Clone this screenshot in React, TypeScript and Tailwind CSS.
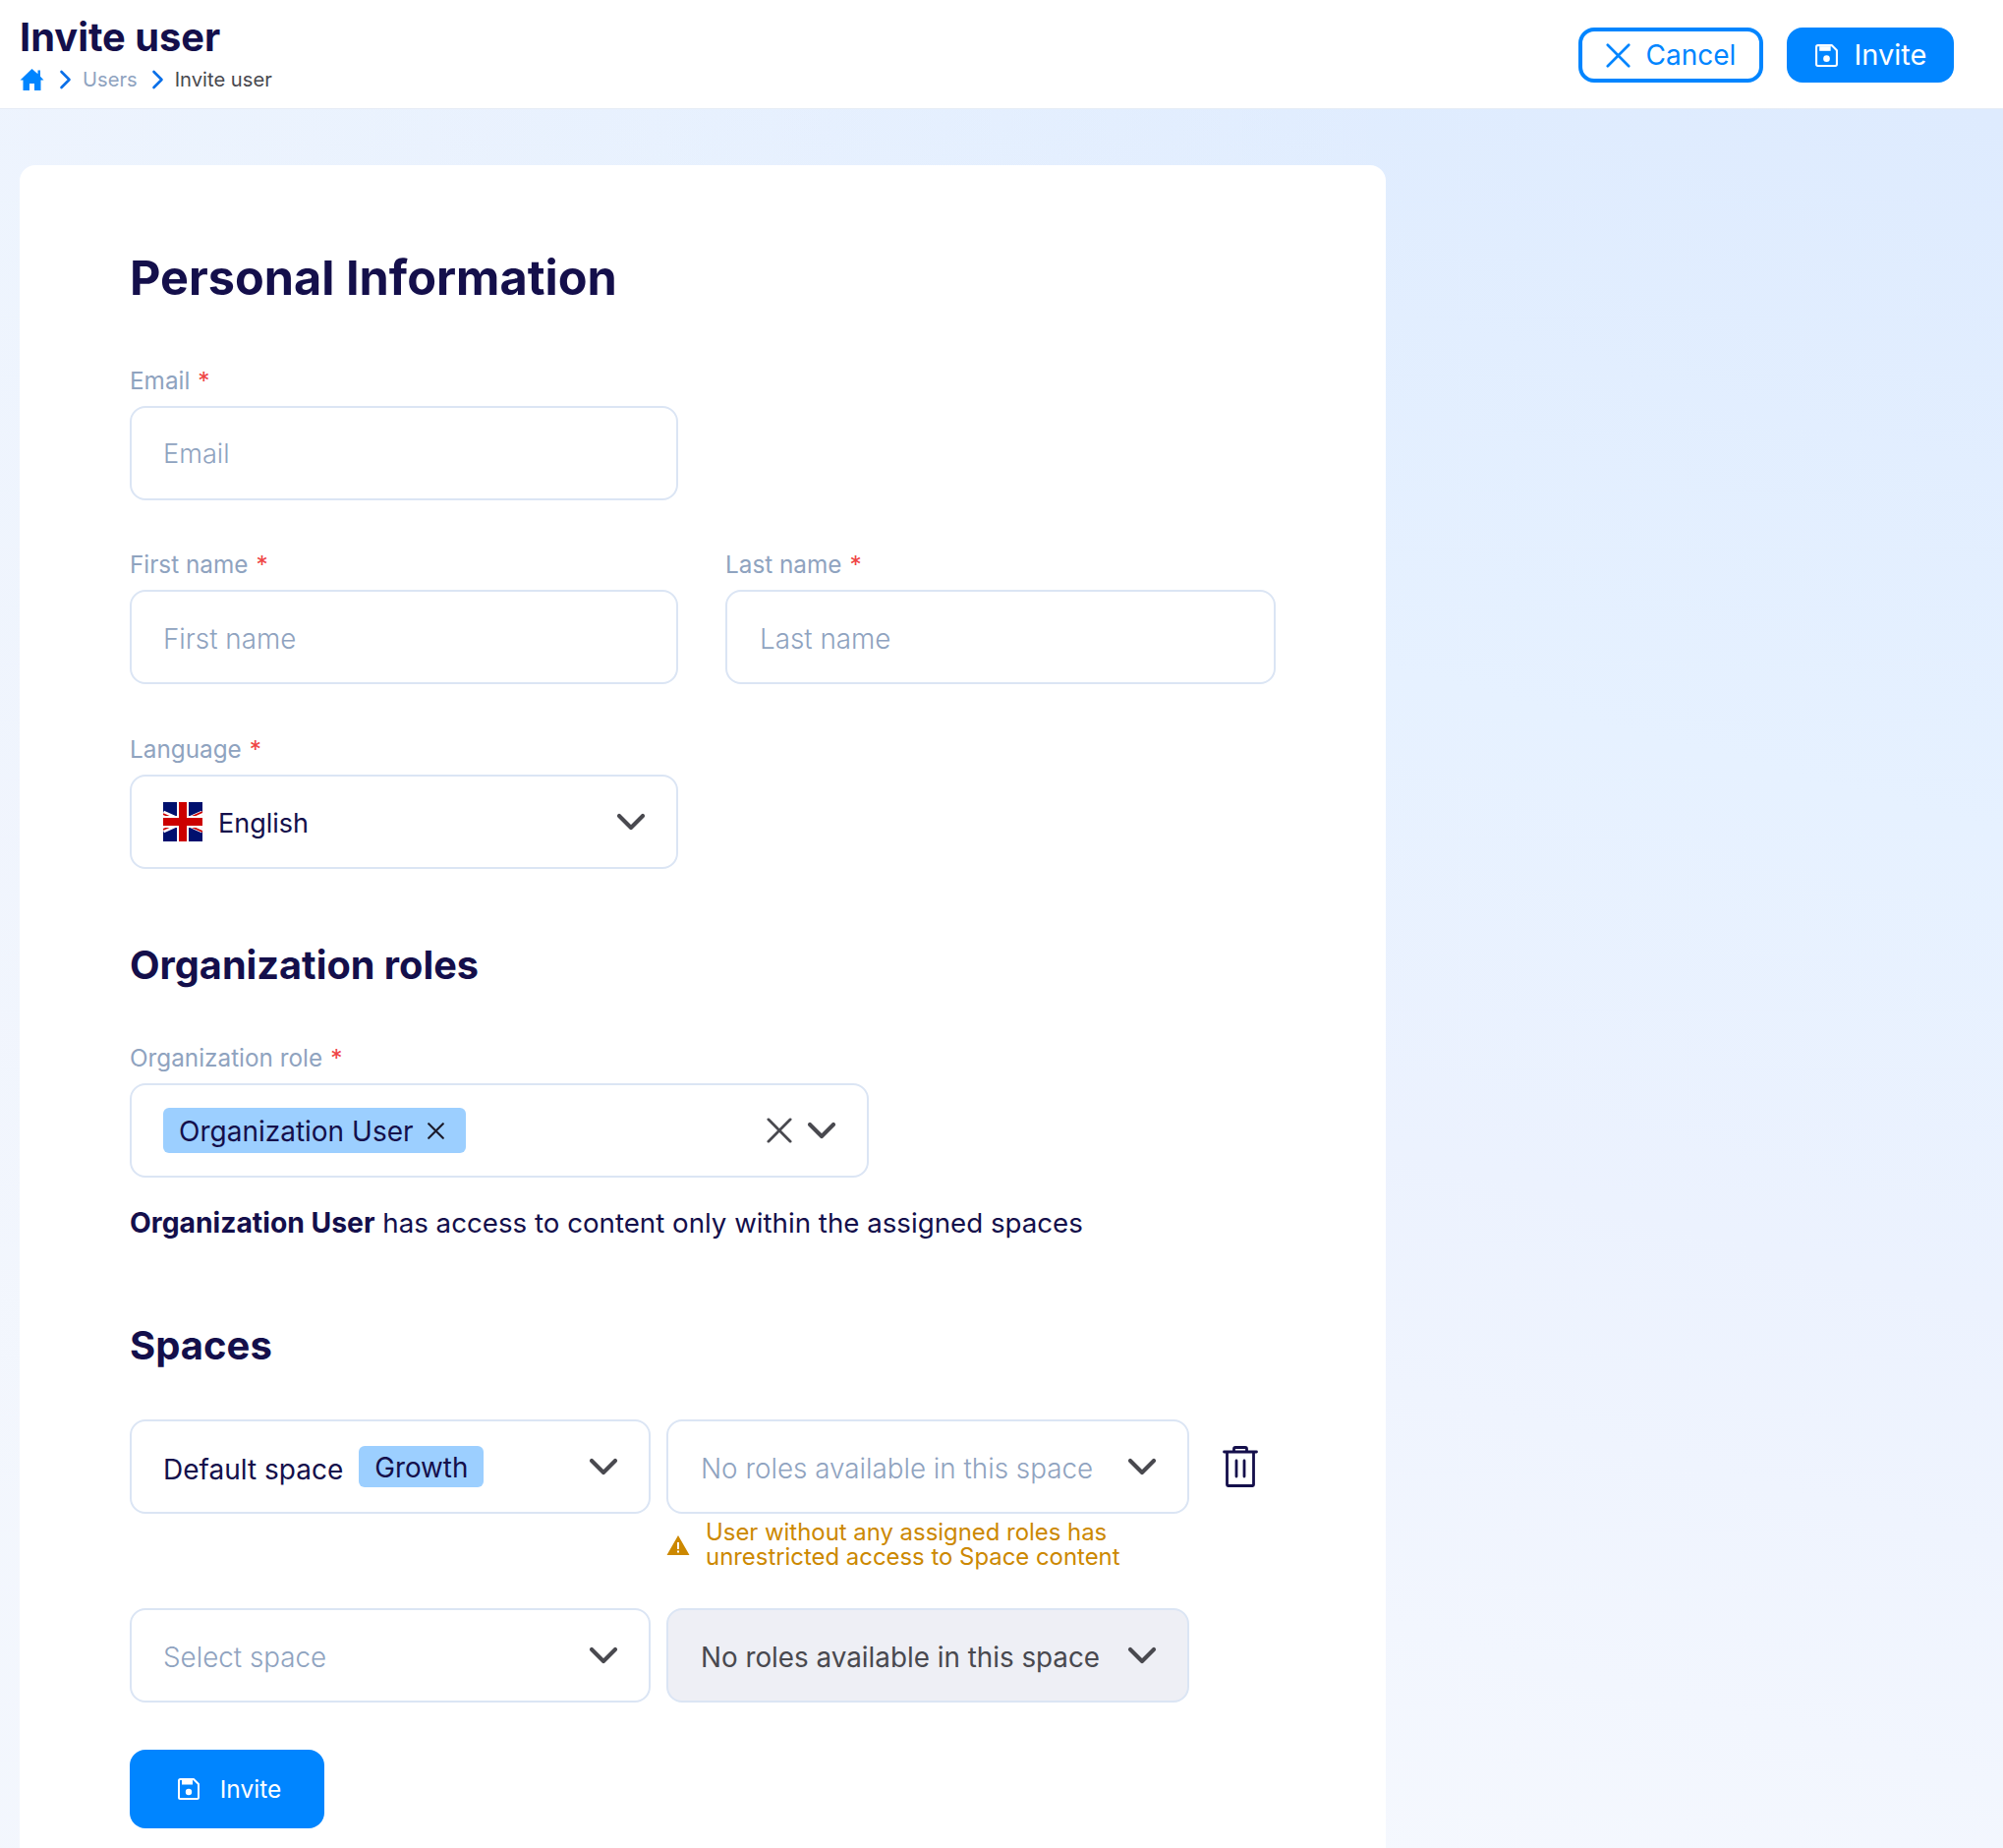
import React from 'react';

const Chevron = ({ className }: { className?: string }) => (
  <svg viewBox="0 0 30 20" fill="none" stroke="currentColor" strokeWidth="4.2" strokeLinecap="round" strokeLinejoin="round" className={className}>
    <path d="M3 4l12 12L27 4" />
  </svg>
);

const Cross = ({ className, width = 3 }: { className?: string; width?: number }) => (
  <svg viewBox="0 0 28 28" fill="none" stroke="currentColor" strokeWidth={width} strokeLinecap="round" className={className}>
    <path d="M2 2l24 24M26 2L2 26" />
  </svg>
);

const Crumb = () => (
  <svg viewBox="0 0 12 20" fill="none" stroke="#0a6fe8" strokeWidth="2.6" strokeLinecap="round" strokeLinejoin="round" className="w-[13px] h-[20px]">
    <path d="M2 2l8 8-8 8" />
  </svg>
);

const Save = ({ className }: { className?: string }) => (
  <svg viewBox="0 0 24 24" fill="none" stroke="currentColor" strokeWidth="2" strokeLinejoin="round" className={className}>
    <path d="M2 3.500A1.500 1.500 0 0 1 3.500 2H17l5 5v13.500a1.500 1.500 0 0 1-1.500 1.500h-17A1.500 1.500 0 0 1 2 20.500z" />
    <path d="M5 3h11v4.500H5z" fill="currentColor" stroke="none" />
    <circle cx="12" cy="15" r="3.200" fill="currentColor" stroke="none" />
  </svg>
);

const Field = ({ label, children }: { label: string; children: React.ReactNode }) => (
  <div className="flex flex-col">
    <div className="h-[28px] mb-[12px] flex items-center gap-[8px] text-[24.300px] text-[#8fa3bf]">
      <span>{label}</span>
      <span className="text-[#ef4444]">*</span>
    </div>
    {children}
  </div>
);

const Box = ({ children, className = '' }: { children?: React.ReactNode; className?: string }) => (
  <div className={`h-[96px] border-2 border-[#dbe5f4] rounded-[16px] flex items-center text-[27.800px] ${className}`}>
    {children}
  </div>
);

const Flag = () => (
  <svg viewBox="0 0 40 40" className="w-[40px] h-[40px] shrink-0">
    <rect width="40" height="40" fill="#00106e" />
    <path d="M0 11L40 29M40 11L0 29" stroke="#fff" strokeWidth="5" />
    <path d="M0 12L40 30M40 10L0 28" stroke="#cc0000" strokeWidth="1.800" />
    <path d="M20 0v40M0 20h40" stroke="#fff" strokeWidth="12" />
    <path d="M20 0v40M0 20h40" stroke="#cc0000" strokeWidth="8" />
  </svg>
);

export default function App() {
  return (
    <div
      className="h-[1880px] overflow-hidden flex flex-col bg-[linear-gradient(90deg,#f2f6fdaa,transparent_70%),linear-gradient(195deg,#deebfe_5%,#e6f1ff_35%,#ecf2fe_55%,#f5f8fe_85%)] text-[#140f4b]"
      style={{ fontFamily: 'Inter, "Liberation Sans", sans-serif' }}
    >
      <header className="h-[111px] shrink-0 bg-white border-b border-[#e6ecf5] pl-[20px] pr-[50px] flex items-center justify-between">
        <div className="flex flex-col">
          <h1 className="text-[39.800px] leading-[48px] font-bold">Invite user</h1>
          <nav className="flex items-center h-[30px] text-[20.200px] mt-[4px]">
            <svg viewBox="0 0 24 24" className="w-[25px] h-[24px] text-[#0085ff]" fill="currentColor">
              <path d="M12 1L0 12.500h3V23h6.500v-7h5v7H21V12.500h3l-3.500-3.700V2.500H18v3.800z" />
            </svg>
            <span className="ml-[15px]"><Crumb /></span>
            <span className="ml-[11px] text-[#8fa3bf]">Users</span>
            <span className="ml-[14px]"><Crumb /></span>
            <span className="ml-[11px] text-[#49494f]">Invite user</span>
          </nav>
        </div>
        <div className="flex items-center gap-[24px] mt-[2px]">
          <button className="w-[188px] h-[56px] border-4 border-[#0085ff] rounded-[16px] flex items-center justify-center gap-[16px] text-[28px] text-[#0085ff] bg-white">
            <Cross className="w-[25px] h-[25px]" />
            Cancel
          </button>
          <button className="w-[170px] h-[56px] rounded-[16px] bg-[#0085ff] flex items-center justify-center gap-[16px] text-[29px] text-white">
            <Save className="w-[25px] h-[25px]" />
            Invite
          </button>
        </div>
      </header>

      <main className="pl-[20px] pt-[57px] flex-1 flex min-h-0">
        <section className="w-[1390px] bg-white rounded-t-[16px] pl-[112px] pt-[87px]">
          <h2 className="text-[48.600px] leading-[56px] font-bold">Personal Information</h2>

          <div className="mt-[62px] w-[1166px] flex flex-col gap-[51px]">
            <div className="w-[558px]">
              <Field label="Email">
                <Box className="pl-[32px] text-[#8fa3bf] font-light">
                  <span className="pt-[2px] text-[27.200px]">Email</span>
                </Box>
              </Field>
            </div>
            <div className="grid grid-cols-[558px_560px] gap-x-[48px]">
              <Field label="First name">
                <Box className="pl-[32px] text-[#8fa3bf] font-light">
                  <span className="pt-[5px]">First name</span>
                </Box>
              </Field>
              <Field label="Last name">
                <Box className="pl-[33px] text-[#8fa3bf] font-light">
                  <span className="pt-[5px]">Last name</span>
                </Box>
              </Field>
            </div>
            <div className="w-[558px] mt-[1px]">
              <Field label="Language">
                <Box className="pl-[32px] pr-[31px] justify-between">
                  <div className="flex items-center gap-[16px]">
                    <Flag />
                    <span className="pt-[5px] text-[27px]">English</span>
                  </div>
                  <Chevron className="w-[30px] h-[20px] text-[#49494f]" />
                </Box>
              </Field>
            </div>
          </div>

          <h3 className="mt-[70px] text-[39.700px] leading-[56px] font-bold">Organization roles</h3>

          <div className="mt-[52px] w-[752px]">
            <Field label="Organization role">
              <Box className="pl-[32px] pr-[31px] justify-between">
                <div className="h-[46px] pl-[16px] pr-[22px] bg-[#9ccfff] rounded-[6px] flex items-center gap-[14px]">
                  <span className="pt-[1px] text-[28px]">Organization User</span>
                  <Cross className="w-[17px] h-[17px] text-[#1c1c2c]" width={3.6} />
                </div>
                <div className="flex items-center gap-[15px] text-[#49494f]">
                  <Cross className="w-[26px] h-[26px]" />
                  <Chevron className="w-[30px] h-[20px]" />
                </div>
              </Box>
            </Field>
          </div>

          <p className="mt-[28px] text-[27.700px] leading-[36px]">
            <span className="font-bold text-[28.300px]">Organization User</span> has access to content only within the assigned spaces
          </p>

          <h3 className="mt-[79px] text-[40px] leading-[56px] font-bold">Spaces</h3>

          <div className="mt-[47px] grid grid-cols-[530px_532px_auto] gap-x-[16px]">
            <Box className="pl-[32px] pr-[31px] justify-between">
              <div className="flex items-center gap-[16px]">
                <span className="pt-[5px] text-[28px]">Default space</span>
                <span className="h-[42px] px-[16px] pt-[3px] bg-[#9ccfff] rounded-[6px] flex items-center">Growth</span>
              </div>
              <Chevron className="w-[30px] h-[20px] text-[#49494f]" />
            </Box>
            <Box className="pl-[33px] pr-[31px] justify-between text-[#8fa3bf] font-light">
              <span className="pt-[5px]">No roles available in this space</span>
              <Chevron className="w-[30px] h-[20px] text-[#49494f]" />
            </Box>
            <div className="h-[96px] flex items-center pl-[18px]">
              <svg viewBox="0 0 36 42" fill="none" stroke="currentColor" strokeWidth="2.800" strokeLinecap="round" strokeLinejoin="round" className="w-[36px] h-[42px]">
                <path d="M1.500 6h33M4.500 6v33.500a1 1 0 0 0 1 1h25a1 1 0 0 0 1-1V6M11.500 6V3a1.500 1.500 0 0 1 1.500-1.500h10A1.500 1.500 0 0 1 24.500 3v3M14 15v16M22 15v16" />
              </svg>
            </div>
            <div />
            <div className="mt-[7px] flex items-center gap-[16px] text-[#cc8800] text-[23.900px] leading-[24.500px]">
              <svg viewBox="0 0 24 22" className="w-[24px] h-[22px] shrink-0" fill="currentColor">
                <path d="M12 1L.5 21h23zM11 8h2v7h-2zm0 8.500h2v2h-2z" fillRule="evenodd" />
              </svg>
              <span>User without any assigned roles has<br />unrestricted access to Space content</span>
            </div>
            <div />
          </div>

          <div className="mt-[40px] grid grid-cols-[530px_532px] gap-x-[16px]">
            <Box className="pl-[32px] pr-[31px] justify-between text-[#8fa3bf] font-light">
              <span className="pt-[5px]">Select space</span>
              <Chevron className="w-[30px] h-[20px] text-[#49494f]" />
            </Box>
            <Box className="pl-[33px] pr-[31px] justify-between bg-[#eeeff5] text-[#49494f]">
              <span className="pt-[5px]">No roles available in this space</span>
              <Chevron className="w-[30px] h-[20px]" />
            </Box>
          </div>

          <button className="mt-[48px] w-[198px] h-[80px] pl-[4px] rounded-[16px] bg-[#0085ff] flex items-center justify-center gap-[20px] text-[24.500px] text-white">
            <Save className="w-[24px] h-[24px]" />
            Invite
          </button>
        </section>
      </main>
    </div>
  );
}
